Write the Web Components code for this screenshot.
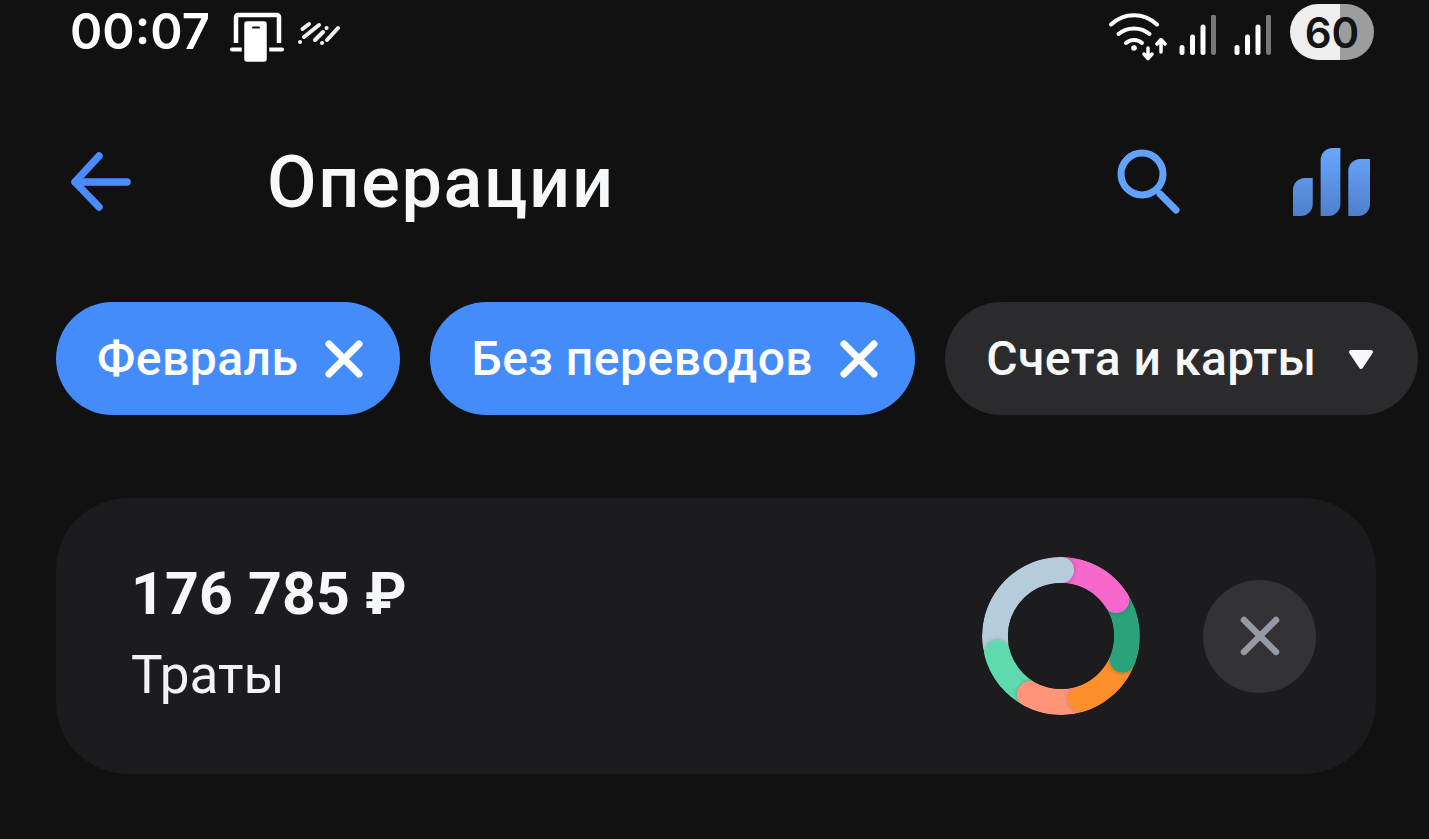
<!doctype html>
<html lang="ru">
<head>
<meta charset="utf-8">
<title>Операции</title>
<style>
  html, body { margin: 0; height: 100%; overflow: hidden; background: #111112; color: #f7f8fa; font-family: Roboto, "Liberation Sans", sans-serif; }
  main { display: flex; flex-direction: column; width: 1429px; height: 839px; }
</style>
</head>
<body>
<main>
  <status-bar time="00:07" battery="60"></status-bar>
  <app-header>Операции</app-header>
  <chip-row>
    <filter-chip active>Февраль</filter-chip>
    <filter-chip active>Без переводов</filter-chip>
    <filter-chip>Счета и карты</filter-chip>
  </chip-row>
  <spend-card amount="176 785 ₽" label="Траты"></spend-card>
</main>

<script>
class StatusBar extends HTMLElement {
  constructor() {
    super();
    const signal = `
      <svg class="signal" width="40" height="42" viewBox="0 0 40 42">
        <g stroke-width="5" stroke-linecap="round" stroke="#fff">
          <path d="M3 32.500v5"/><path d="M13.500 22v15.500"/><path d="M24 12v25.500"/>
          <path d="M34.500 2v35.500" stroke="#777"/>
        </g>
      </svg>`;

    this.attachShadow({mode: 'open'}).innerHTML = `
      <style>
        :host { display: flex; align-items: flex-start; height: 64px; box-sizing: border-box; padding: 4px 55px 0 70px; font-family: Inter, Roboto, sans-serif; }
        #time { font-size: 49px; font-weight: 600; line-height: 56px; color: #fff; }
        #cast { margin: 7px 0 0 20px; }
        #lines { margin: 17px 0 0 14px; }
        #right { display: flex; align-items: flex-start; margin-left: auto; }
        #wifi { margin-top: 7px; }
        .signal { margin-top: 11px; margin-left: 12px; }
        .signal + .signal { margin-left: 15px; }
        #battery {
          display: flex; align-items: center; justify-content: center;
          width: 84px; height: 56px; margin-left: 16px; border-radius: 28px;
          background: linear-gradient(90deg, #eeeeee 60%, #9d9d9d 60%);
          color: #141414; font-size: 42px; font-weight: 600;
        }
      </style>
      <span id="time">${this.getAttribute('time')}</span>
      <svg id="cast" width="54" height="52" viewBox="0 0 54 52" fill="none">
        <path d="M6 32V6a2 2 0 0 1 2-2h39a2 2 0 0 1 2 2v26" stroke="#fff" stroke-width="4.500"/>
        <path d="M2 38.500h50" stroke="#fff" stroke-width="4" stroke-linecap="round"/>
        <rect x="13" y="9" width="25" height="43" rx="4" fill="#fff" stroke="#111112" stroke-width="2.500"/>
        <path d="M23 16.500h6" stroke="#111112" stroke-width="2" stroke-linecap="round"/>
      </svg>
      <svg id="lines" width="44" height="26" viewBox="0 0 44 26" fill="none" stroke="#f2f2f2" stroke-width="4" stroke-linecap="round">
        <path d="M4.500 8L11 3"/><path d="M6 16L21 4"/><path d="M2 21h.1"/>
        <path d="M17 19l8-8"/><path d="M28.500 7h.1"/>
        <path d="M29 19L40 7"/><path d="M24 22h.1"/>
      </svg>
      <div id="right">
        <svg id="wifi" width="58" height="50" viewBox="0 0 58 50" fill="none" stroke="#fff" stroke-linecap="round" stroke-linejoin="round">
          <path d="M2 13.500C15 1 35 1 48 13.500" stroke-width="4"/>
          <path d="M9.500 23C18 15.500 32 15.500 40.500 23" stroke-width="4"/>
          <path d="M17 32c4.500-4 11.500-4 16 0" stroke-width="4"/>
          <circle cx="25" cy="37" r="2.800" fill="#fff" stroke="none"/>
          <path d="M39 37v10M35 43l4 4.500 4-4.500" stroke-width="3.500"/>
          <path d="M52 41V29M48 33l4-4.500 4 4.500" stroke-width="3.500"/>
        </svg>
        ${signal}${signal}
        <div id="battery">${this.getAttribute('battery')}</div>
      </div>
    `;
  }
}

class AppHeader extends HTMLElement {
  constructor() {
    super();

    this.attachShadow({mode: 'open'}).innerHTML = `
      <style>
        :host { display: flex; align-items: center; height: 236px; padding: 0 59px 0 71px; }
        h1 { margin: 0 0 0 136px; font-size: 72px; font-weight: 530; letter-spacing: 1.700px; color: #f7f8fa; }
        #search { margin-left: auto; }
        #stats { margin-left: 112px; }
      </style>
      <svg width="60" height="60" viewBox="0 0 60 60" fill="none" stroke="#4a8cff" stroke-width="7.500" stroke-linecap="round" stroke-linejoin="round">
        <path d="M28 4L4 30l24 25M4 30h52"/>
      </svg>
      <h1><slot></slot></h1>
      <svg id="search" width="66" height="68" viewBox="0 0 66 68" fill="none" stroke="#63a1ff" stroke-linecap="round">
        <circle cx="27" cy="26" r="21" stroke-width="7"/>
        <path d="M45 46l16 16" stroke-width="7"/>
      </svg>
      <svg id="stats" width="77" height="68" viewBox="0 0 78 68" preserveAspectRatio="none">
        <defs>
          <linearGradient id="fade" gradientUnits="userSpaceOnUse" x1="0" y1="0" x2="0" y2="68">
            <stop offset="0" stop-color="#6aa6ff"/>
            <stop offset="1" stop-color="#4f7fcb"/>
          </linearGradient>
        </defs>
        <g fill="url(#fade)">
          <path d="M0 42a12 12 0 0 1 12-12h8v26a12 12 0 0 1-12 12H0z"/>
          <path d="M28 12A12 12 0 0 1 40 0h8v56a12 12 0 0 1-12 12h-8z"/>
          <path d="M56 23a12 12 0 0 1 12-12h10v45a12 12 0 0 1-12 12H56z"/>
        </g>
      </svg>
    `;
  }
}

class ChipRow extends HTMLElement {
  constructor() {
    super();

    this.attachShadow({mode: 'open'}).innerHTML = `
      <style>
        :host { display: flex; gap: 30px; margin-top: 2px; padding-left: 56px; }
      </style>
      <slot></slot>
    `;
  }
}

class FilterChip extends HTMLElement {
  constructor() {
    super();

    const icon = this.hasAttribute('active')
      ? `<svg width="40" height="40" viewBox="0 0 40 40" fill="none" stroke="#fff" stroke-width="7" stroke-linecap="round"><path d="M5 5l30 30M35 5L5 35"/></svg>`
      : `<svg class="caret" width="28" height="22" viewBox="0 0 28 22"><path d="M4 2h20a2 2 0 0 1 1.700 3L15.700 20a2 2 0 0 1-3.400 0L2.300 5A2 2 0 0 1 4 2z" fill="#f7f8fa"/></svg>`;

    this.attachShadow({mode: 'open'}).innerHTML = `
      <style>
        :host {
          display: flex; align-items: center; height: 113px; box-sizing: border-box;
          padding: 0 36px 0 41px; border-radius: 57px; background: #2b2b2d;
          font-size: 48px; font-weight: 500; letter-spacing: .5px; white-space: nowrap; color: #f7f8fa;
        }
        :host([active]) { background: #458cfb; color: #fff; }
        svg { margin-left: 26px; }
        .caret { margin-left: 30px; margin-right: 7px; }
      </style>
      <slot></slot>${icon}
    `;
  }
}

class DonutChart extends HTMLElement {
  constructor() {
    super();

    // drawn so that every segment's rounded end lies over the next one,
    // the first one comes back at the end to sit on top of the last
    const segments = [
      {color: '#5fd9ae', from: 195, to: 255},
      {color: '#ff9478', from: 150, to: 208},
      {color: '#ff8f2b', from: 100, to: 162},
      {color: '#2ba27a', from: 45, to: 111},
      {color: '#f768cc', from: -20, to: 57},
      {color: '#b5cddb', from: 262, to: 360},
      {color: '#5fd9ae', from: 245, to: 255}
    ];
    const paths = segments.map(({color, from, to}) => `
      <path d="${this.arc(from, to)}" stroke="${color}" filter="url(#soft)"/>`).join('');

    this.attachShadow({mode: 'open'}).innerHTML = `
      <style>
        :host { display: block; width: 160px; height: 160px; }
      </style>
      <svg width="160" height="160" viewBox="0 0 160 160" fill="none">
        <defs>
          <mask id="ring" maskUnits="userSpaceOnUse" x="0" y="0" width="160" height="160"><circle cx="80" cy="80" r="66" stroke="#fff" stroke-width="26" fill="none"/></mask>
          <filter id="soft" filterUnits="userSpaceOnUse" x="0" y="0" width="160" height="160">
            <feDropShadow dx="0" dy="0" stdDeviation="2" flood-color="#000" flood-opacity=".28"/>
          </filter>
        </defs>
        <g mask="url(#ring)" stroke-width="26" stroke-linecap="round">${paths}
          <path d="${this.arc(232, 250)}" stroke="#5fd9ae"/>
        </g>
      </svg>
    `;
  }

  point(angle) {
    const rad = angle * Math.PI / 180;
    return `${(80 + 66 * Math.sin(rad)).toFixed(2)} ${(80 - 66 * Math.cos(rad)).toFixed(2)}`;
  }

  arc(from, to) {
    const large = to - from > 180 ? 1 : 0;
    return `M${this.point(from)}A66 66 0 ${large} 1 ${this.point(to)}`;
  }
}

class SpendCard extends HTMLElement {
  constructor() {
    super();

    this.attachShadow({mode: 'open'}).innerHTML = `
      <style>
        :host {
          display: flex; align-items: center; width: 1320px; height: 276px; box-sizing: border-box;
          margin: 83px 0 0 56px; padding: 0 60px 0 75px; border-radius: 72px; background: #1c1c1e;
        }
        #text { display: flex; flex-direction: column; margin-right: auto; padding-bottom: 6px; }
        #amount { font-size: 59px; font-weight: 700; letter-spacing: .2px; line-height: 64px; color: #f7f8fa; }
        #label { margin-top: 20px; font-size: 53px; line-height: 58px; color: #f2f3f5; }
        #close {
          display: flex; align-items: center; justify-content: center;
          width: 113px; height: 113px; margin-left: 62px; border-radius: 50%; background: #333335;
        }
      </style>
      <div id="text">
        <span id="amount">${this.getAttribute('amount')}</span>
        <span id="label">${this.getAttribute('label')}</span>
      </div>
      <donut-chart></donut-chart>
      <div id="close">
        <svg width="44" height="44" viewBox="0 0 44 44" fill="none" stroke="#969aa5" stroke-width="6.500" stroke-linecap="round"><path d="M6 6l32 32M38 6L6 38"/></svg>
      </div>
    `;
  }
}

customElements.define('status-bar', StatusBar);
customElements.define('app-header', AppHeader);
customElements.define('chip-row', ChipRow);
customElements.define('filter-chip', FilterChip);
customElements.define('donut-chart', DonutChart);
customElements.define('spend-card', SpendCard);
</script>
</body>
</html>
